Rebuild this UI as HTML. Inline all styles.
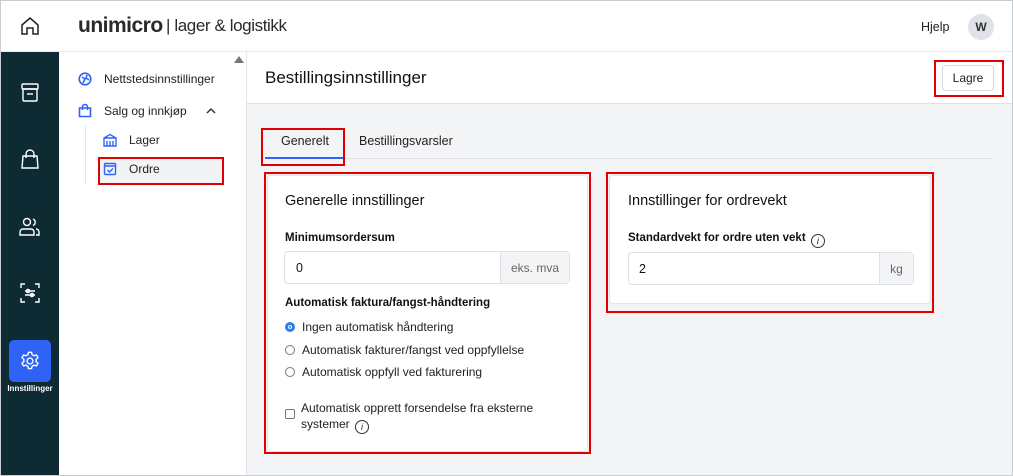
<!DOCTYPE html>
<html><head><meta charset="utf-8"><style>
*{box-sizing:border-box;margin:0;padding:0}
body{width:1013px;height:476px;overflow:hidden;font-family:"Liberation Sans",sans-serif;color:#111;background:#fff;position:relative}
.a{position:absolute}
.frame{left:0;top:0;width:1013px;height:476px;border:1px solid #c9ccd1;pointer-events:none;z-index:10}
.red{border:2px solid #e00000;position:absolute}
.card{background:#fff;border:1px solid #e3e5e9;border-radius:4px;position:absolute}
.lbl{font-size:11.5px;font-weight:bold;color:#111}
.inp{position:absolute;height:33px;border:1px solid #dde0e4;border-radius:4px;background:#fff;font-size:12.5px}
.suf{position:absolute;right:0;top:0;bottom:0;background:#f3f4f6;border-left:1px solid #dde0e4;color:#666;font-size:12px;display:flex;align-items:center;justify-content:center}
.opt{font-size:12px;color:#222;position:absolute;left:285px}
.rad{display:inline-block;width:10px;height:10px;border:1px solid #777;border-radius:50%;vertical-align:-1px;margin-right:7px}
svg{display:block}
</style></head><body>
<div class="a frame"></div>
<div class="a" style="left:0;top:0;width:1013px;height:52px;background:#fff;border-bottom:1px solid #e6e8eb"></div>
<svg class="a" style="left:19px;top:15px" width="22" height="22" viewBox="0 0 22 22" fill="none" stroke="#222" stroke-width="1.5"><path d="M3 10 L11 3 L19 10 V19 H14 V13 H8 V19 H3 Z"/></svg>
<div class="a" style="left:78px;top:14px;font-size:21px;font-weight:bold;letter-spacing:-0.5px;color:#2a2a2a">unimicro</div>
<div class="a" style="left:166px;top:16px;font-size:17px;color:#2a2a2a;letter-spacing:-0.4px">| lager &amp; logistikk</div>
<div class="a" style="left:921px;top:20px;font-size:12.5px;color:#222">Hjelp</div>
<div class="a" style="left:968px;top:14px;width:26px;height:26px;border-radius:50%;background:#dfe2e6;font-size:12px;font-weight:bold;color:#333;text-align:center;line-height:26px">W</div>
<div class="a" style="left:1px;top:52px;width:58px;height:423px;background:#0e2a33"></div>
<svg class="a" style="left:20px;top:82px" width="20" height="22" viewBox="0 0 20 22" fill="none" stroke="#fff" stroke-width="1.4"><rect x="2" y="2" width="16" height="5" rx="1"/><rect x="3" y="7" width="14" height="12" rx="1"/><path d="M7 12 H13"/></svg>
<svg class="a" style="left:20px;top:148px" width="20" height="22" viewBox="0 0 20 22" fill="none" stroke="#fff" stroke-width="1.4"><path d="M3 8 H17 L18 20 H2 Z"/><path d="M6 10 V6 a4 4 0 0 1 8 0 V10"/></svg>
<svg class="a" style="left:19px;top:216px" width="22" height="22" viewBox="0 0 22 22" fill="none" stroke="#fff" stroke-width="1.4"><circle cx="8" cy="6" r="3.5"/><path d="M1 19 V16 a3 3 0 0 1 3-3 H12 a3 3 0 0 1 3 3 V19 Z"/><path d="M14 3 a3.5 3.5 0 0 1 0 6.5 M17 13 a3 3 0 0 1 3 3 V19 H17"/></svg>
<svg class="a" style="left:19px;top:282px" width="22" height="22" viewBox="0 0 22 22" fill="none" stroke="#fff" stroke-width="1.4"><path d="M2 6 V2 H6 M16 2 H20 V6 M20 16 V20 H16 M6 20 H2 V16"/><path d="M6 9 H16 M6 13 H16"/><circle cx="9" cy="9" r="1.6"/><circle cx="13" cy="13" r="1.6"/></svg>
<div class="a" style="left:9px;top:340px;width:42px;height:42px;border-radius:5px;background:#2f63f5"></div>
<svg class="a" style="left:19px;top:350px" width="22" height="22" viewBox="0 0 24 24" fill="none" stroke="#fff" stroke-width="1.5"><circle cx="12" cy="12" r="3.2"/><path d="M10.3 2.5h3.4l.6 2.6 2.2 1.2 2.5-.9 1.7 2.9-2 1.8v2.6l2 1.8-1.7 2.9-2.5-.9-2.200 1.2-.6 2.6h-3.4l-.6-2.6-2.2-1.2-2.5.9-1.7-2.9 2-1.8v-2.6l-2-1.8 1.7-2.9 2.5.9 2.2-1.2z"/></svg>
<div class="a" style="left:2px;top:384px;width:56px;text-align:center;font-size:8px;font-weight:bold;color:#fff">Innstillinger</div>
<div class="a" style="left:59px;top:52px;width:188px;height:424px;background:#fff;border-right:1px solid #e3e5e9"></div>
<div class="a" style="left:234px;top:56px;width:0;height:0;border-left:5px solid transparent;border-right:5px solid transparent;border-bottom:7px solid #777"></div>
<svg class="a" style="left:78px;top:72px" width="14" height="14" viewBox="0 0 14 14" fill="none" stroke="#2f63f5" stroke-width="1.6"><circle cx="7" cy="7" r="5.8"/><path d="M4 5 L7 7 L5 11 M9 3 L8 6 L11 8"/></svg>
<div class="a" style="left:104px;top:72px;font-size:12px;color:#222">Nettstedsinnstillinger</div>
<svg class="a" style="left:78px;top:103px" width="14" height="15" viewBox="0 0 14 15" fill="none" stroke="#2f63f5" stroke-width="1.6"><path d="M1.5 5 H12.5 V13.5 H1.5 Z"/><path d="M4.5 7 V4 a2.5 2.5 0 0 1 5 0 V7"/></svg>
<div class="a" style="left:104px;top:104px;font-size:12px;color:#222">Salg og innkjøp</div>
<svg class="a" style="left:206px;top:107px" width="10" height="7" viewBox="0 0 10 7" fill="none" stroke="#333" stroke-width="1.5"><path d="M1 6 L5 2 L9 6"/></svg>
<div class="a" style="left:85px;top:126px;width:1px;height:58px;background:#e3e5e9"></div>
<svg class="a" style="left:103px;top:133px" width="14" height="14" viewBox="0 0 14 14" fill="none" stroke="#2f63f5" stroke-width="1.4"><path d="M1 5 L7 1.5 L13 5 V13 H1 Z M1 5 H13"/><path d="M4 8 V13 M7 8 V13 M10 8 V13"/></svg>
<div class="a" style="left:129px;top:133px;font-size:12px;color:#222">Lager</div>
<div class="a" style="left:99px;top:158px;width:124px;height:26px;background:#f2f3f5"></div>
<svg class="a" style="left:103px;top:162px" width="14" height="14" viewBox="0 0 14 14" fill="none" stroke="#2f63f5" stroke-width="1.4"><rect x="1.5" y="1.5" width="11" height="11" rx="1"/><path d="M1.5 4 H12.5 M4.5 8 L6.5 10 L10 6.5"/></svg>
<div class="a" style="left:129px;top:162px;font-size:12px;color:#222">Ordre</div>
<div class="red" style="left:98px;top:157px;width:126px;height:28px"></div>
<div class="a" style="left:247px;top:52px;width:765px;height:52px;background:#fff;border-bottom:1px solid #dfe1e5"></div>
<div class="a" style="left:247px;top:104px;width:765px;height:371px;background:#f3f4f6"></div>
<div class="a" style="left:265px;top:68px;font-size:17px;color:#111">Bestillingsinnstillinger</div>
<div class="a" style="left:942px;top:65px;width:52px;height:26px;border:1px solid #d6d9dd;border-radius:4px;background:#fff;font-size:12px;text-align:center;line-height:24px;color:#222">Lagre</div>
<div class="red" style="left:934px;top:60px;width:70px;height:37px"></div>
<div class="a" style="left:265px;top:158px;width:728px;height:1px;background:#dfe1e5"></div>
<div class="a" style="left:265px;top:157px;width:78px;height:2px;background:#2f63f5"></div>
<div class="a" style="left:281px;top:134px;font-size:12.5px;color:#222">Generelt</div>
<div class="a" style="left:359px;top:134px;font-size:12.5px;color:#222">Bestillingsvarsler</div>
<div class="red" style="left:261px;top:128px;width:84px;height:38px"></div>
<div class="card" style="left:267px;top:175px;width:321px;height:277px"></div>
<div class="a" style="left:285px;top:193px;font-size:14.5px;color:#111">Generelle innstillinger</div>
<div class="a lbl" style="left:285px;top:232px">Minimumsordersum</div>
<div class="inp" style="left:284px;top:251px;width:286px"><span class="a" style="left:11px;top:9px">0</span><div class="suf" style="width:69px">eks. mva</div></div>
<div class="a lbl" style="left:285px;top:297px">Automatisk faktura/fangst-håndtering</div>
<div class="opt" style="top:320px"><span class="rad" style="border:3px solid #2f7bf0;box-shadow:inset 0 0 0 1px #fff;background:#2f7bf0"></span>Ingen automatisk håndtering</div>
<div class="opt" style="top:343px"><span class="rad"></span>Automatisk fakturer/fangst ved oppfyllelse</div>
<div class="opt" style="top:365px"><span class="rad"></span>Automatisk oppfyll ved fakturering</div>
<div class="a" style="left:285px;top:409px;width:10px;height:10px;border:1px solid #777;border-radius:2px"></div>
<div class="a" style="left:301px;top:400px;font-size:12px;color:#222;line-height:16px">Automatisk opprett forsendelse fra eksterne<br>systemer <span style="display:inline-block;width:14px;height:14px;border:1.3px solid #333;border-radius:50%;font-size:9px;text-align:center;line-height:12px;font-style:italic;vertical-align:-2px;margin-left:2px">i</span></div>
<div class="red" style="left:264px;top:172px;width:327px;height:282px"></div>
<div class="card" style="left:609px;top:175px;width:322px;height:129px"></div>
<div class="a" style="left:628px;top:193px;font-size:14.5px;color:#111">Innstillinger for ordrevekt</div>
<div class="a lbl" style="left:628px;top:232px">Standardvekt for ordre uten vekt <span style="display:inline-block;width:14px;height:14px;border:1.3px solid #333;border-radius:50%;font-size:9px;text-align:center;line-height:12px;font-weight:normal;font-style:italic;vertical-align:-3px;margin-left:2px">i</span></div>
<div class="inp" style="left:628px;top:252px;width:286px"><span class="a" style="left:10px;top:9px">2</span><div class="suf" style="width:34px">kg</div></div>
<div class="red" style="left:606px;top:172px;width:328px;height:141px"></div>
</body></html>
